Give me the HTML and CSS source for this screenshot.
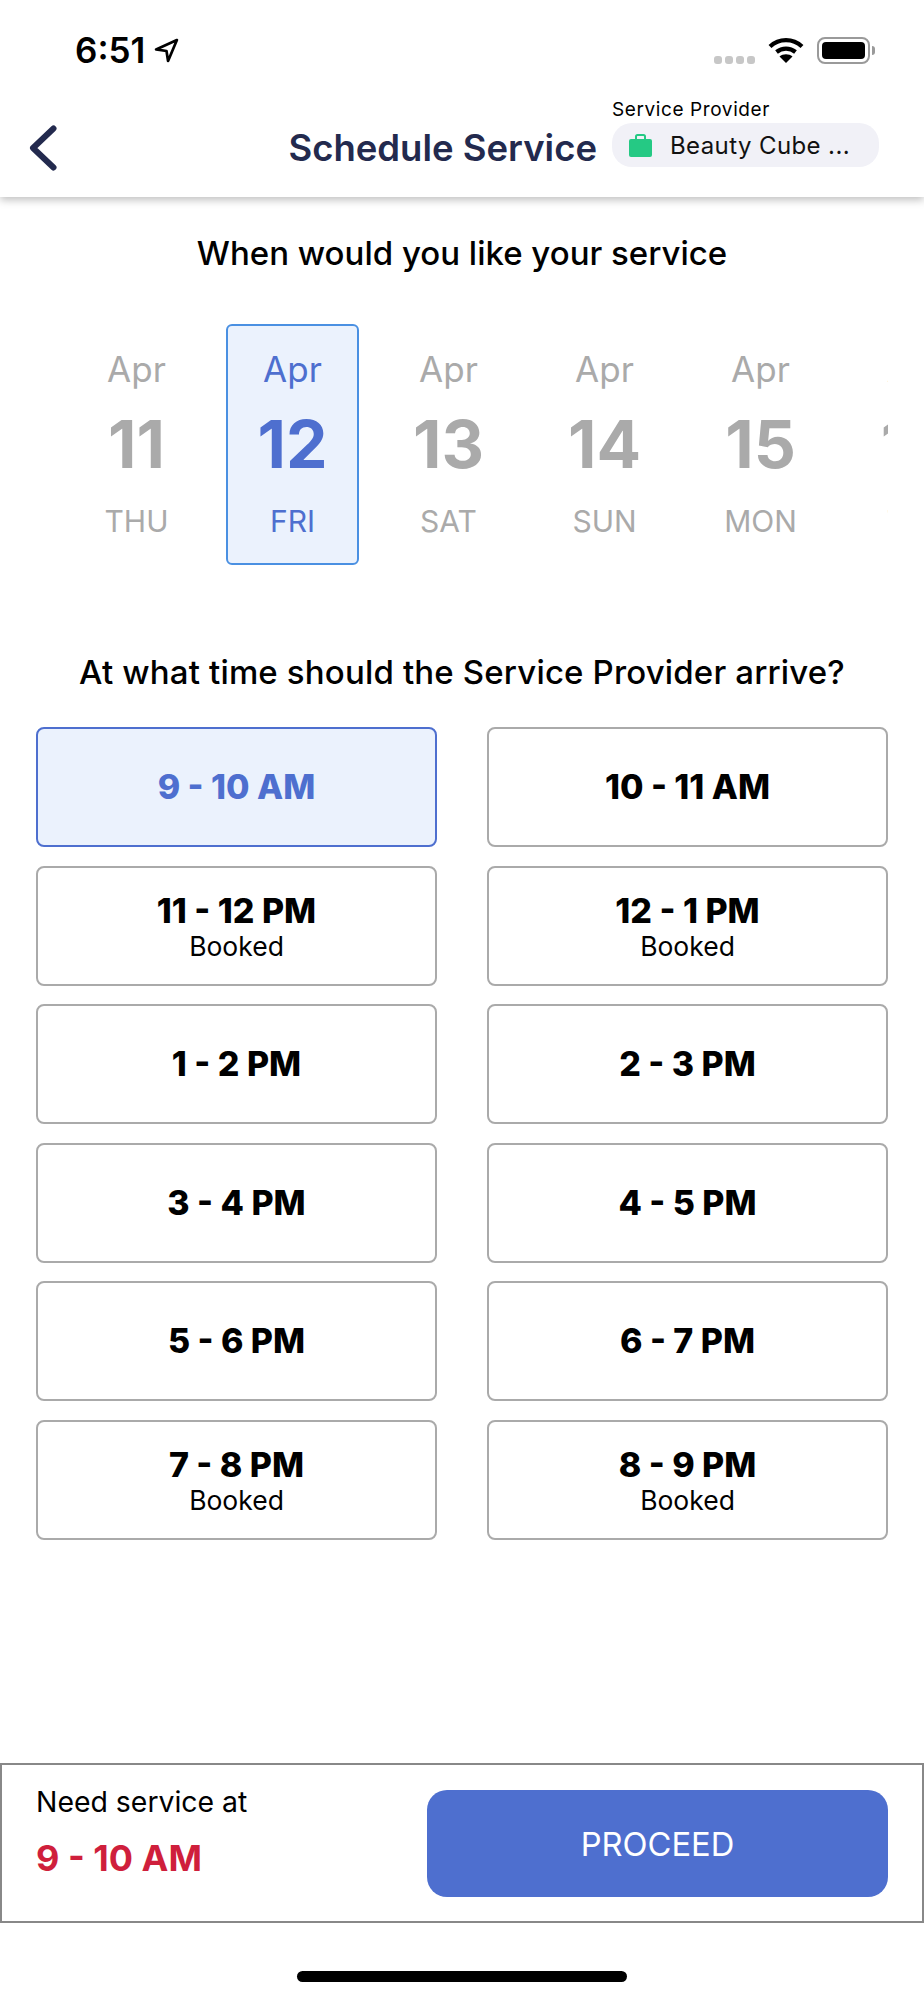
FILE: index.html
```html
<!DOCTYPE html>
<html lang="en">

<head>
    <meta charset="UTF-8">
    <meta name="viewport" content="width=device-width, initial-scale=1.0">
    <title>Schedule Service</title>
    <link rel="stylesheet" href="styles.css">
</head>

<body>
    <div class="page">
        <header class="top">
            <div class="status-bar">
                <div class="status-left">
                    <span class="clock">6:51</span>
                    <svg class="loc-arrow" width="25" height="25" viewBox="0 0 24 24">
                        <path d="M22 2 L2 11 L12 12.5 L13.5 22 Z" fill="none" stroke="#000" stroke-width="2.6" stroke-linejoin="round" />
                    </svg>
                </div>
                <div class="status-right">
                    <div class="signal"><i></i><i></i><i></i><i></i></div>
                    <svg class="wifi" width="36" height="26" viewBox="0 0 36 26">
                        <path d="M2 9.5 C11 1 25 1 34 9.5" fill="none" stroke="#000" stroke-width="4.2" />
                        <path d="M8.5 15 C14 10.5 22 10.5 27.5 15" fill="none" stroke="#000" stroke-width="4.2" />
                        <path d="M18 26 L11.5 19.5 C15 16.5 21 16.5 24.5 19.5 Z" fill="#000" />
                    </svg>
                    <div class="battery"><div class="battery-fill"></div></div>
                    <div class="battery-cap"></div>
                </div>
            </div>
            <nav class="nav-bar">
                <svg class="back" width="28" height="46" viewBox="0 0 28 46">
                    <path d="M24.5 3.5 L4 23 L24.5 42.5" fill="none" stroke="#232a4e" stroke-width="6" stroke-linecap="round" stroke-linejoin="round" />
                </svg>
                <h1 class="nav-title">Schedule Service</h1>
                <div class="provider">
                    <div class="provider-label">Service Provider</div>
                    <div class="provider-pill">
                        <svg class="bag" width="23" height="23" viewBox="0 0 23 23">
                            <path d="M7 5 V2.5 Q7 1 8.5 1 H14.5 Q16 1 16 2.5 V5" fill="none" stroke="#25c984" stroke-width="2" />
                            <rect x="0" y="5" width="23" height="18" rx="2" fill="#25c984" />
                        </svg>
                        <span class="provider-name">Beauty Cube ...</span>
                    </div>
                </div>
            </nav>
        </header>

        <main class="content">
            <h2 class="question q-date">When would you like your service</h2>
            <div class="date-strip">
                <div class="date-item"><span class="month">Apr</span><span class="day-num">11</span><span class="day-name">THU</span></div>
                <div class="date-item selected"><span class="month">Apr</span><span class="day-num">12</span><span class="day-name">FRI</span></div>
                <div class="date-item"><span class="month">Apr</span><span class="day-num">13</span><span class="day-name">SAT</span></div>
                <div class="date-item"><span class="month">Apr</span><span class="day-num">14</span><span class="day-name">SUN</span></div>
                <div class="date-item"><span class="month">Apr</span><span class="day-num">15</span><span class="day-name">MON</span></div>
                <div class="date-item"><span class="month">Apr</span><span class="day-num">16</span><span class="day-name">TUE</span></div>
            </div>

            <h2 class="question q-time">At what time should the Service Provider arrive?</h2>
            <div class="slots">
                <div class="slot selected"><span class="slot-time">9 - 10 AM</span></div>
                <div class="slot"><span class="slot-time">10 - 11 AM</span></div>
                <div class="slot"><span class="slot-time">11 - 12 PM</span><span class="slot-note">Booked</span></div>
                <div class="slot"><span class="slot-time">12 - 1 PM</span><span class="slot-note">Booked</span></div>
                <div class="slot"><span class="slot-time">1 - 2 PM</span></div>
                <div class="slot"><span class="slot-time">2 - 3 PM</span></div>
                <div class="slot"><span class="slot-time">3 - 4 PM</span></div>
                <div class="slot"><span class="slot-time">4 - 5 PM</span></div>
                <div class="slot"><span class="slot-time">5 - 6 PM</span></div>
                <div class="slot"><span class="slot-time">6 - 7 PM</span></div>
                <div class="slot"><span class="slot-time">7 - 8 PM</span><span class="slot-note">Booked</span></div>
                <div class="slot"><span class="slot-time">8 - 9 PM</span><span class="slot-note">Booked</span></div>
            </div>
        </main>

        <footer class="summary">
            <div class="summary-text">
                <div class="summary-label">Need service at</div>
                <div class="summary-time">9 - 10 AM</div>
            </div>
            <button class="proceed-btn">PROCEED</button>
        </footer>
        <div class="home-bar"><div class="home-indicator"></div></div>
    </div>
</body>

</html>
```

FILE: styles.css
```css
* {
    margin: 0;
    padding: 0;
    box-sizing: border-box;
}

body {
    background-color: #ffffff;
    color: #000000;
    font-family: "Inter", "Liberation Sans", sans-serif;
}

.page {
    width: 924px;
    height: 2000px;
    display: flex;
    flex-direction: column;
    overflow: hidden;
}

/* status bar + nav */
.top {
    height: 197px;
    background-color: #ffffff;
    box-shadow: 0 3px 8px rgba(0, 0, 0, 0.25);
    position: relative;
}

.status-bar {
    height: 90px;
    padding: 30px 49px 0 75px;
    display: flex;
    justify-content: space-between;
    align-items: flex-start;
}

.status-left {
    display: flex;
    align-items: center;
    gap: 9px;
    height: 40px;
}

.clock {
    font-size: 35px;
    font-weight: 600;
    line-height: 40px;
}

.status-right {
    display: flex;
    align-items: center;
    height: 40px;
}

.signal {
    display: flex;
    gap: 3px;
    margin: 20px 13px 0 0;
}

.signal i {
    width: 8px;
    height: 8px;
    border-radius: 3px;
    background-color: #c7c7c7;
}

.battery {
    width: 53px;
    height: 27px;
    margin-left: 13px;
    padding: 3px;
    border: 2px solid #9a9a9a;
    border-radius: 8px;
}

.battery-fill {
    height: 100%;
    background-color: #000000;
    border-radius: 4px;
}

.battery-cap {
    width: 3px;
    height: 9px;
    margin-left: 2px;
    background-color: #9a9a9a;
    border-radius: 0 3px 3px 0;
}

.nav-bar {
    height: 107px;
    padding: 10px 45px 0 29px;
    display: flex;
    align-items: flex-start;
}

.back {
    margin-top: 25px;
}

.nav-title {
    margin: 27px 15px 0 auto;
    font-size: 36.5px;
    font-weight: 600;
    line-height: 42px;
    color: #232a4e;
}

.provider-label {
    font-size: 19px;
    line-height: 22px;
    margin-top: -1px;
    margin-bottom: 2px;
    letter-spacing: 0.6px;
}

.provider-pill {
    width: 267px;
    height: 44px;
    padding-left: 17px;
    display: flex;
    align-items: center;
    gap: 18px;
    background-color: #f1f1f7;
    border-radius: 20px;
}

.provider-name {
    font-size: 24px;
    letter-spacing: 0.4px;
    color: #111111;
}

/* main area */
.content {
    flex: 1;
    padding: 0 36px;
}

.question {
    font-size: 33px;
    font-weight: 500;
    line-height: 36px;
    text-align: center;
}

.q-date {
    margin-top: 38px;
}

.q-time {
    margin-top: 89px;
    letter-spacing: 0.16px;
}

.date-strip {
    display: flex;
    gap: 23px;
    padding-left: 34px;
    margin-top: 53px;
    overflow: hidden;
}

.date-item {
    flex: none;
    width: 133px;
    height: 241px;
    padding-top: 21px;
    display: flex;
    flex-direction: column;
    align-items: center;
    color: #aaaaaa;
    border: 2px solid transparent;
    border-radius: 6px;
}

.date-item.selected {
    color: #4e6fcf;
    background-color: #ebf2fd;
    border-color: #4a90e2;
}

.month {
    font-size: 35px;
    line-height: 44px;
}

.day-num {
    font-size: 66px;
    font-weight: 700;
    line-height: 76px;
    margin-top: 15px;
}

.day-name {
    font-size: 30px;
    line-height: 36px;
    margin-top: 21px;
}

.slots {
    display: grid;
    grid-template-columns: 401px 401px;
    grid-auto-rows: 120px;
    justify-content: space-between;
    row-gap: 18.6px;
    margin-top: 37px;
}

.slot {
    display: flex;
    flex-direction: column;
    align-items: center;
    justify-content: center;
    border: 2px solid #aaaaaa;
    border-radius: 8px;
}

.slot.selected {
    color: #4e6fcf;
    background-color: #ebf2fd;
    border-color: #4e6fcf;
}

.slot-time {
    font-size: 34px;
    font-weight: 800;
    line-height: 40px;
}

.slot-note {
    font-size: 26.5px;
    line-height: 30px;
}

/* bottom summary */
.summary {
    height: 160px;
    padding: 21px 34px 0 34px;
    display: flex;
    justify-content: space-between;
    align-items: flex-start;
    border: 2px solid #888888;
}

.summary-label {
    font-size: 28.4px;
    line-height: 32px;
}

.summary-time {
    margin-top: 19px;
    font-size: 36px;
    font-weight: 700;
    line-height: 42px;
    color: #cf1f3c;
}

.proceed-btn {
    width: 461px;
    height: 107px;
    margin-top: 4px;
    border: none;
    border-radius: 20px;
    background-color: #4e6fcf;
    color: #ffffff;
    font-family: inherit;
    font-size: 32.7px;
    cursor: pointer;
}

.home-bar {
    height: 77px;
    padding-top: 48px;
}

.home-indicator {
    width: 330px;
    height: 11px;
    margin: 0 auto;
    background-color: #000000;
    border-radius: 6px;
}
```
